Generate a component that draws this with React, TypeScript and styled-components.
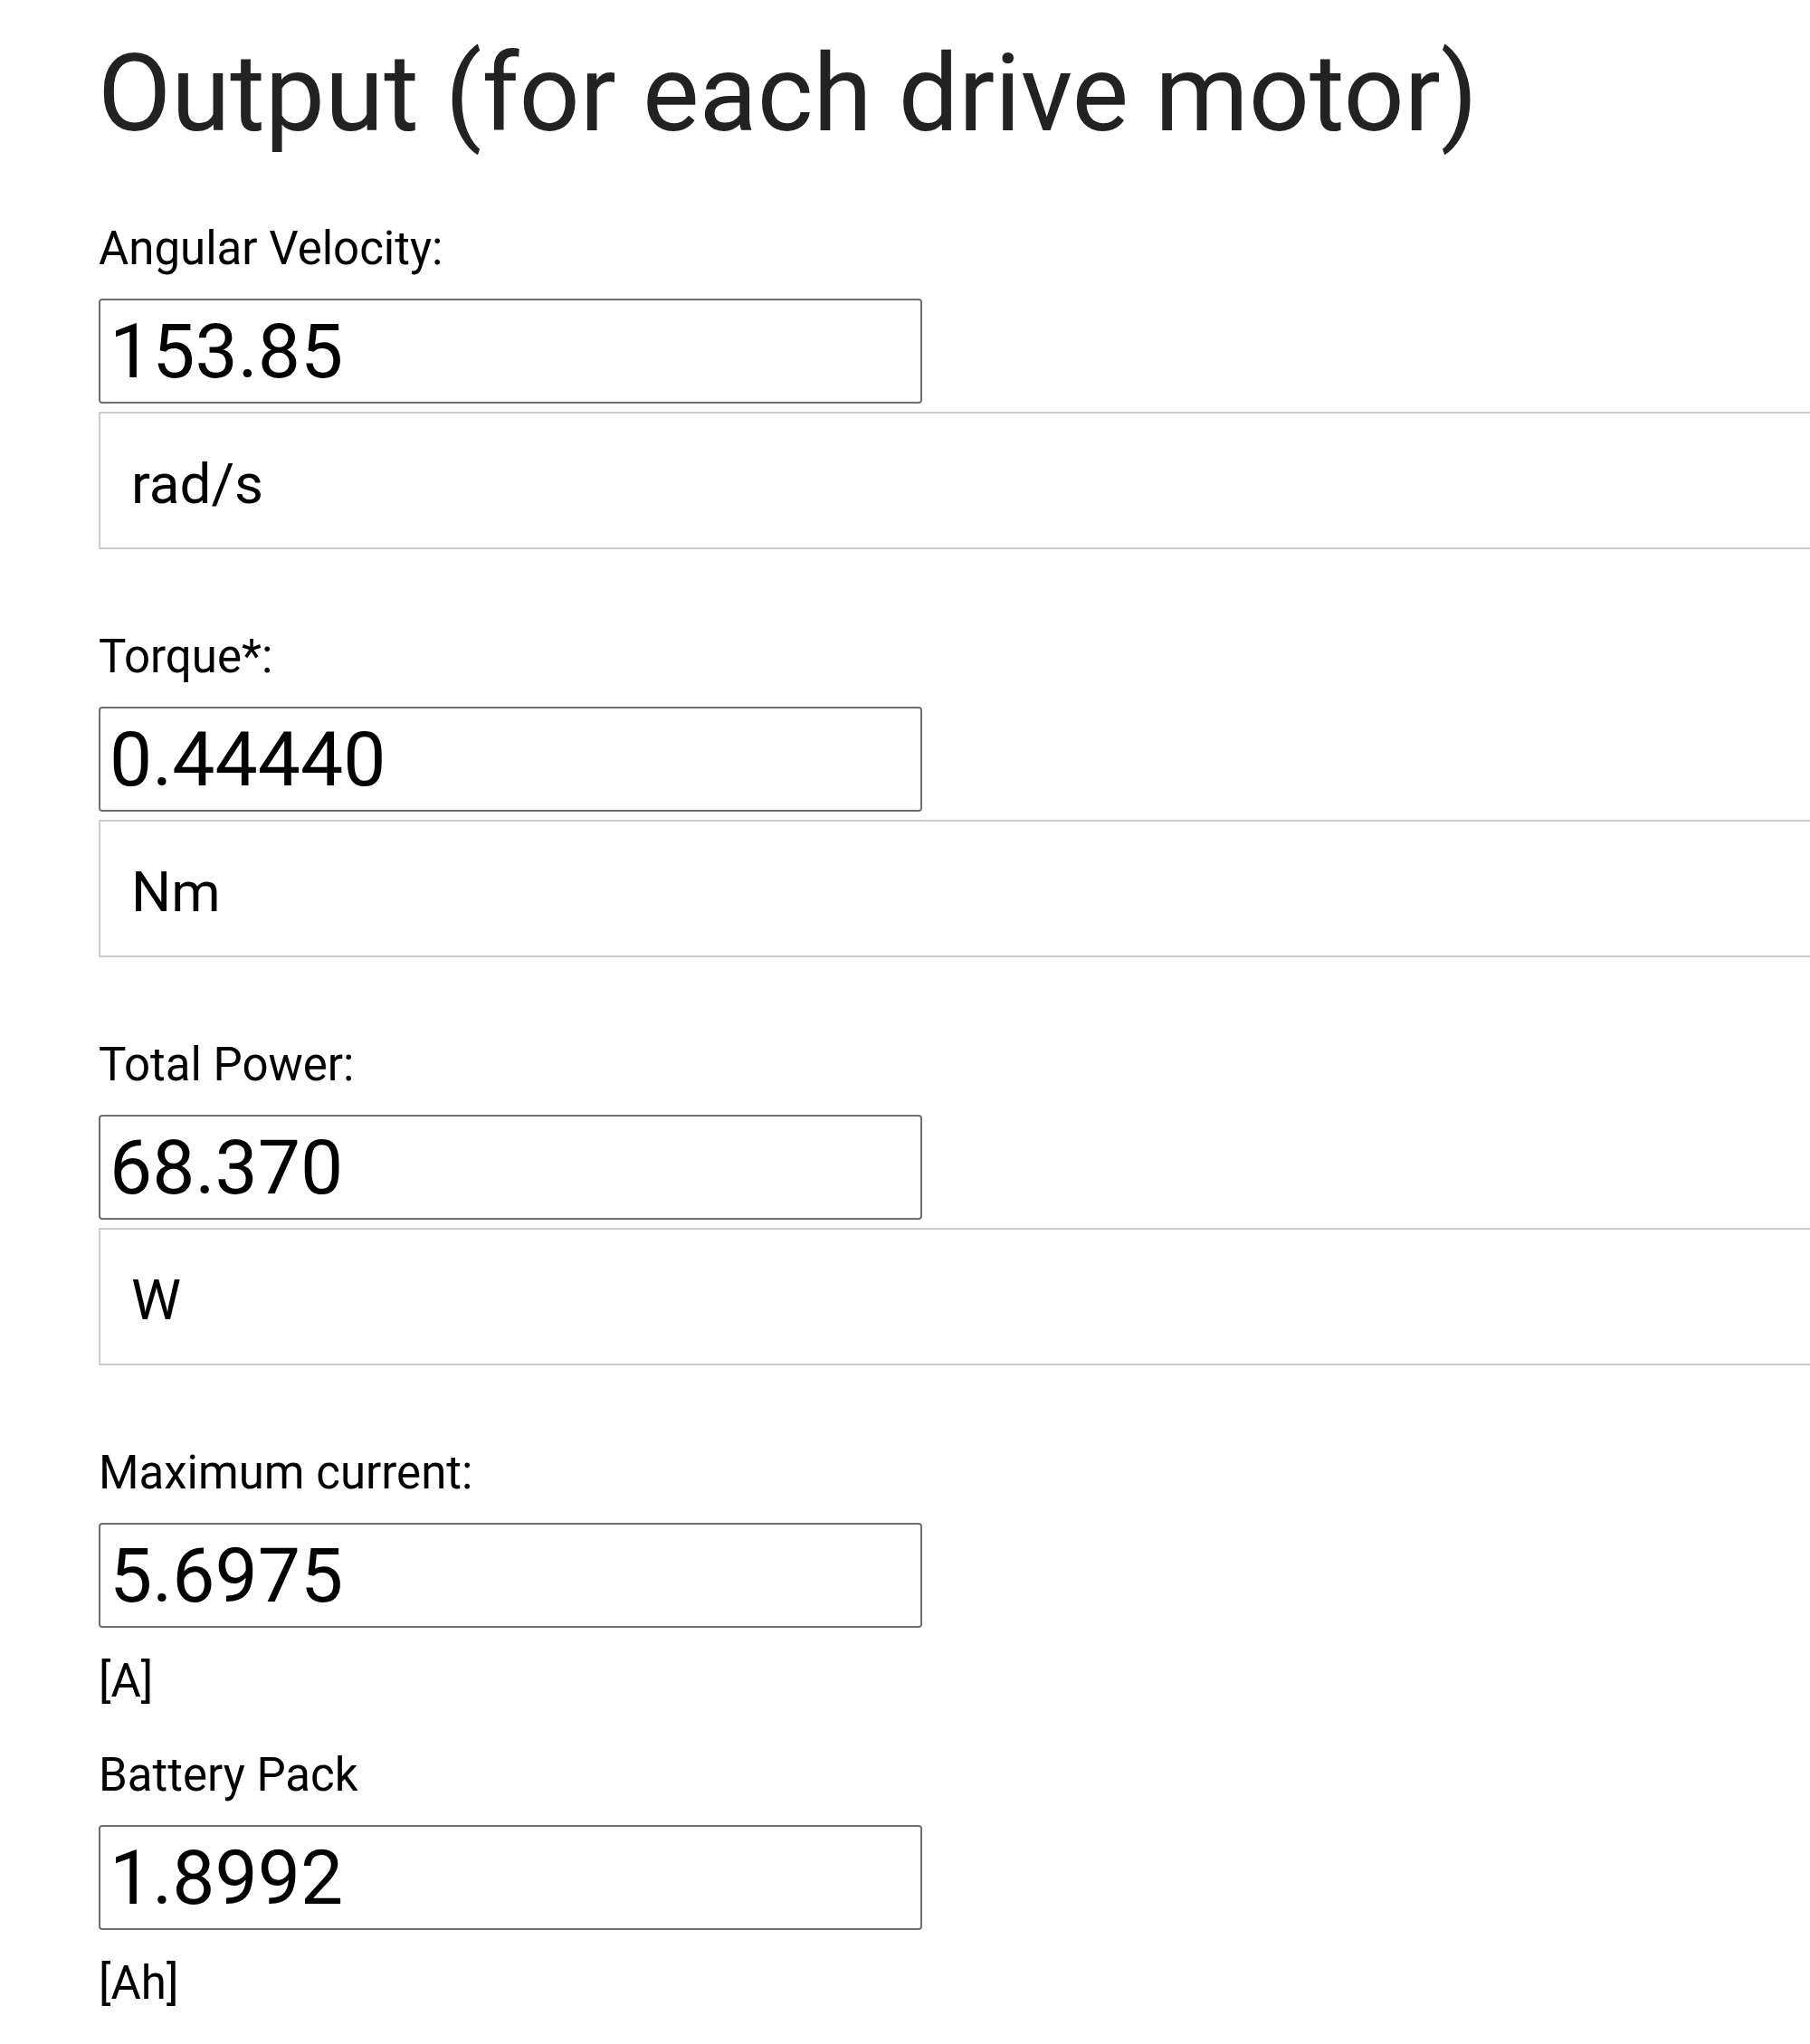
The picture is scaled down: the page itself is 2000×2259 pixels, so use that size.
import React from "react";
import styled, { createGlobalStyle } from "styled-components";

const GlobalStyle = createGlobalStyle`
  html, body {
    margin: 0;
    padding: 0;
    background: #ffffff;
    overflow-x: hidden;
  }
  body {
    font-family: Roboto, "Liberation Sans", Arial, sans-serif;
    color: #000;
  }
`;

const Page = styled.div`
  display: flex;
  flex-direction: column;
  padding: 34px 0 40px 109px;
`;

const Heading = styled.h1`
  margin: 0 0 69px -1px;
  font-family: Roboto, "Liberation Sans", Arial, sans-serif;
  font-weight: 400;
  font-size: 118px;
  line-height: 141px;
  color: #222222;
  white-space: nowrap;
`;

const Section = styled.section<{ $gapAfter: number }>`
  display: flex;
  flex-direction: column;
  align-items: flex-start;
  margin-bottom: ${(p) => p.$gapAfter}px;
`;

const Label = styled.label`
  display: block;
  font-size: 51px;
  line-height: 61px;
  height: 61px;
  color: #000;
  white-space: nowrap;
`;

const ValueInput = styled.input`
  box-sizing: border-box;
  margin: 25px 0 0 0;
  width: 910px;
  height: 116px;
  padding: 0 10px;
  border: 2px solid #6e6e6e;
  border-radius: 4px;
  background: #ffffff;
  font-family: Roboto, "Liberation Sans", Arial, sans-serif;
  font-size: 84px;
  color: #000;
  outline: none;
`;

const UnitBox = styled.div`
  box-sizing: border-box;
  margin-top: 9px;
  width: 2100px;
  height: 152px;
  padding: 6px 0 0 34px;
  display: flex;
  align-items: center;
  border: 2px solid #cdcdcd;
  background: #ffffff;
  font-size: 62px;
  color: #000;
`;

const UnitText = styled.div<{ $top: number }>`
  margin-top: ${(p) => p.$top}px;
  font-size: 51px;
  line-height: 61px;
  color: #000;
`;

type Row = {
  label: string;
  value: string;
  unit: string;
  boxed: boolean;
};

const rows: Row[] = [
  { label: "Angular Velocity:", value: "153.85", unit: "rad/s", boxed: true },
  { label: "Torque*:", value: "0.44440", unit: "Nm", boxed: true },
  { label: "Total Power:", value: "68.370", unit: "W", boxed: true },
  { label: "Maximum current:", value: "5.6975", unit: "[A]", boxed: false },
  { label: "Battery Pack", value: "1.8992", unit: "[Ah]", boxed: false },
];

export default function App() {
  return (
    <>
      <GlobalStyle />
      <Page>
        <Heading>Output (for each drive motor)</Heading>
        {rows.map((r, i) => (
          <Section key={r.label} $gapAfter={r.boxed ? 88 : i === rows.length - 1 ? 0 : 43}>
            <Label>{r.label}</Label>
            <ValueInput type="text" readOnly value={r.value} aria-label={r.label} />
            {r.boxed ? <UnitBox>{r.unit}</UnitBox> : <UnitText $top={28}>{r.unit}</UnitText>}
          </Section>
        ))}
      </Page>
    </>
  );
}
